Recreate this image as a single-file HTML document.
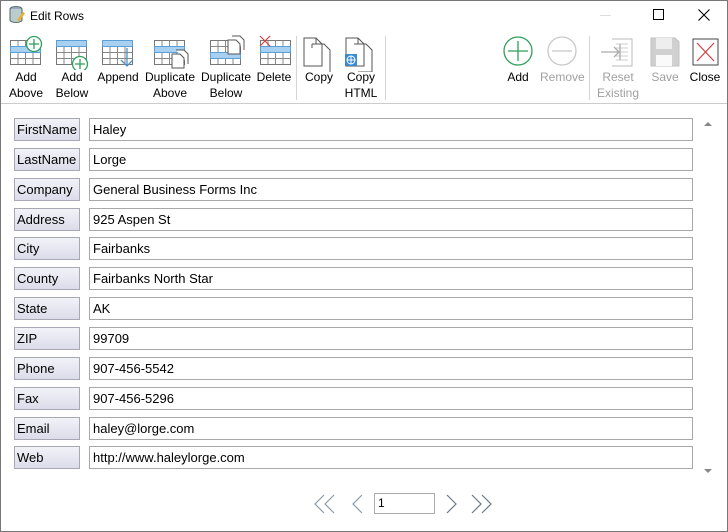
<!DOCTYPE html>
<html><head><meta charset="utf-8"><style>
*{margin:0;padding:0;box-sizing:border-box}
body{width:728px;height:532px;background:#fff;font-family:"Liberation Sans",sans-serif;font-size:12px;color:#000;position:relative;overflow:hidden}
.win{position:absolute;left:0;top:0;width:728px;height:532px;border:1px solid #777}
.t{position:absolute;text-align:center;font-size:12px;line-height:16px;white-space:nowrap}
.g{color:#a0a0a0}
.sep{position:absolute;width:1px;background:#d5d5d5;top:36px;height:64px}
.lbl{position:absolute;left:14px;width:66px;height:23px;border:1px solid #a8a8b4;background:linear-gradient(#f2f2f8,#dcdcea);font-size:13px;line-height:21px;padding-left:2px}
.inp{position:absolute;left:89px;width:604px;height:23px;border:1px solid #a8a8a8;font-size:13px;line-height:21px;padding-left:3px}
svg{position:absolute}
</style></head><body>
<div class="win"></div>
<svg style="left:9px;top:6px" width="16" height="18" viewBox="0 0 16 18"><ellipse cx="7" cy="3" rx="6" ry="2.5" fill="#9ab" stroke="#566"/><path d="M1 3v11c0 1.5 3 2.5 6 2.5s6-1 6-2.5V3" fill="#bcc" stroke="#566"/><path d="M8 14l6-8 2 1.5-6 8z" fill="#e8b030"/></svg>
<div class="t" style="left:30px;top:8px">Edit Rows</div>
<div style="position:absolute;left:600px;top:15px;width:11px;height:1px;background:#ddd"></div>
<div style="position:absolute;left:653px;top:9px;width:11px;height:11px;border:1px solid #000"></div>
<svg style="left:698px;top:9px" width="12" height="12"><path d="M0.5 0.5l11 11M11.5 0.5l-11 11" stroke="#000" stroke-width="1.1"/></svg>

<svg style="left:0;top:30px" width="300" height="40">
<defs><g id="grid"><rect x="0.5" y="0.5" width="30" height="24" fill="#fff" stroke="#777"/><path d="M0.5 6.5h30M0.5 12.5h30M0.5 18.5h30M8 0.5v24M15.5 0.5v24M23 0.5v24" stroke="#888" fill="none"/></g></defs>
<g transform="translate(10,10)"><use href="#grid"/><rect x="0.5" y="6.5" width="30" height="6" fill="#a8d0f0" stroke="#5aa0d8"/></g>
<circle cx="34" cy="14" r="7.5" fill="#fff" stroke="#2ea05a" stroke-width="1.3"/><path d="M34 9v10M29 14h10" stroke="#2ea05a" stroke-width="1.3"/>
<g transform="translate(56,10)"><use href="#grid"/><rect x="0.5" y="0.5" width="30" height="6" fill="#a8d0f0" stroke="#5aa0d8"/></g>
<circle cx="80" cy="34" r="7.5" fill="#fff" stroke="#2ea05a" stroke-width="1.3"/><path d="M80 29v10M75 34h10" stroke="#2ea05a" stroke-width="1.3"/>
<g transform="translate(102,10)"><use href="#grid"/><rect x="0.5" y="0.5" width="30" height="6" fill="#a8d0f0" stroke="#5aa0d8"/></g>
<path d="M127 18v18M121 30l6 6 6-6" stroke="#4a90c8" stroke-width="1.3" fill="none"/>
<g transform="translate(154,10)"><use href="#grid"/><rect x="0.5" y="6.5" width="30" height="6" fill="#a8d0f0" stroke="#5aa0d8"/></g>
<path d="M172 24h8l4 4v10h-12zM176 20h8l4 4v10" fill="#fff" stroke="#555"/>
<g transform="translate(210,10)"><use href="#grid"/><rect x="0.5" y="12.5" width="30" height="6" fill="#a8d0f0" stroke="#5aa0d8"/></g>
<path d="M228 10h8l4 4v10h-12zM232 6h8l4 4v10" fill="#fff" stroke="#555"/>
<g transform="translate(260,10)"><use href="#grid"/><rect x="0.5" y="6.5" width="30" height="6" fill="#a8d0f0" stroke="#5aa0d8"/></g>
<path d="M260 6l10 10M270 6l-10 10" stroke="#d04040" stroke-width="1.2"/>
</svg>
<svg style="left:300px;top:34px" width="90" height="38">
<path d="M4 4h12l6 6v22H4z M16 4v6h6" fill="#fff" stroke="#555"/>
<path d="M12 10h12l6 6v22" fill="none" stroke="#555"/><path d="M12 10v4" stroke="#555"/>
<path d="M46 4h12l6 6v22H46z M58 4v6h6" fill="#fff" stroke="#555"/>
<path d="M54 10h12l6 6v22H58" fill="none" stroke="#555"/>
<rect x="45" y="20" width="12" height="12" fill="#3a8ad0"/><circle cx="51" cy="26" r="4" fill="none" stroke="#fff"/><path d="M47 26h8M51 22v8" stroke="#fff"/>
</svg>
<div class="sep" style="left:296px"></div>
<div class="sep" style="left:385px"></div>
<div class="sep" style="left:589px"></div>
<div class="t" style="left:4px;top:69px;width:44px">Add<br>Above</div>
<div class="t" style="left:50px;top:69px;width:44px">Add<br>Below</div>
<div class="t" style="left:96px;top:69px;width:44px">Append</div>
<div class="t" style="left:143px;top:69px;width:54px">Duplicate<br>Above</div>
<div class="t" style="left:199px;top:69px;width:54px">Duplicate<br>Below</div>
<div class="t" style="left:254px;top:69px;width:40px">Delete</div>
<div class="t" style="left:300px;top:69px;width:38px">Copy</div>
<div class="t" style="left:342px;top:69px;width:38px">Copy<br>HTML</div>
<svg style="left:500px;top:34px" width="228" height="36">
<circle cx="18" cy="17" r="14" fill="none" stroke="#2ea05a" stroke-width="1.3"/><path d="M18 7v20M8 17h20" stroke="#2ea05a" stroke-width="1.3"/>
<circle cx="62" cy="17" r="14" fill="none" stroke="#c8c8c8" stroke-width="1.3"/><path d="M52 17h20" stroke="#c8c8c8" stroke-width="1.3"/>
<path d="M112 5h20v27h-20" fill="none" stroke="#bbb"/><path d="M116 10h12M116 14h12M116 18h12M116 22h12M116 26h12" stroke="#ccc"/><path d="M101 18h18M114 13l5 5-5 5M120 10v16" stroke="#aaa" fill="none" stroke-width="1.3"/>
<path d="M151 4h24l4 4v24h-28z" fill="#d0d0d0" stroke="#c0c0c0"/><rect x="156" y="4" width="16" height="11" fill="#eee"/><rect x="156" y="21" width="16" height="11" fill="#fafafa"/>
<rect x="193" y="5" width="25" height="26" fill="#fff" stroke="#444"/><path d="M197 9l17 18M214 9l-17 18" stroke="#d04040" stroke-width="1.2"/>
</svg>
<div class="t" style="left:498px;top:69px;width:40px">Add</div>
<div class="t g" style="left:540px;top:69px;width:44px">Remove</div>
<div class="t g" style="left:596px;top:69px;width:44px">Reset<br>Existing</div>
<div class="t g" style="left:645px;top:69px;width:40px">Save</div>
<div class="t" style="left:686px;top:69px;width:38px">Close</div>
<div style="position:absolute;left:1px;top:103px;width:726px;height:1px;background:#ccc"></div>

<div class="lbl" style="top:118px">FirstName</div><div class="inp" style="top:118px">Haley</div>
<div class="lbl" style="top:148px">LastName</div><div class="inp" style="top:148px">Lorge</div>
<div class="lbl" style="top:178px">Company</div><div class="inp" style="top:178px">General Business Forms Inc</div>
<div class="lbl" style="top:208px">Address</div><div class="inp" style="top:208px">925 Aspen St</div>
<div class="lbl" style="top:237px">City</div><div class="inp" style="top:237px">Fairbanks</div>
<div class="lbl" style="top:267px">County</div><div class="inp" style="top:267px">Fairbanks North Star</div>
<div class="lbl" style="top:297px">State</div><div class="inp" style="top:297px">AK</div>
<div class="lbl" style="top:327px">ZIP</div><div class="inp" style="top:327px">99709</div>
<div class="lbl" style="top:357px">Phone</div><div class="inp" style="top:357px">907-456-5542</div>
<div class="lbl" style="top:387px">Fax</div><div class="inp" style="top:387px">907-456-5296</div>
<div class="lbl" style="top:417px">Email</div><div class="inp" style="top:417px">haley@lorge.com</div>
<div class="lbl" style="top:446px">Web</div><div class="inp" style="top:446px">http://www.haleylorge.com</div>
<svg style="left:703px;top:120px" width="10" height="8"><path d="M1 6l4-4 4 4z" fill="#888"/></svg>
<svg style="left:703px;top:467px" width="10" height="8"><path d="M1 2l4 4 4-4z" fill="#888"/></svg>

<svg style="left:310px;top:492px" width="190" height="24">
<path d="M14 3l-9 9 9 9M24 3l-9 9 9 9M52 3l-9 9 9 9" stroke="#8a9aaa" stroke-width="1.2" fill="none"/>
<path d="M137 3l9 9-9 9M162 3l9 9-9 9M172 3l9 9-9 9" stroke="#6a7a8a" stroke-width="1.2" fill="none"/>
</svg>
<div style="position:absolute;left:374px;top:493px;width:61px;height:21px;border:1px solid #aaa;font-size:12px;line-height:19px;padding-left:3px">1</div>
</body></html>
